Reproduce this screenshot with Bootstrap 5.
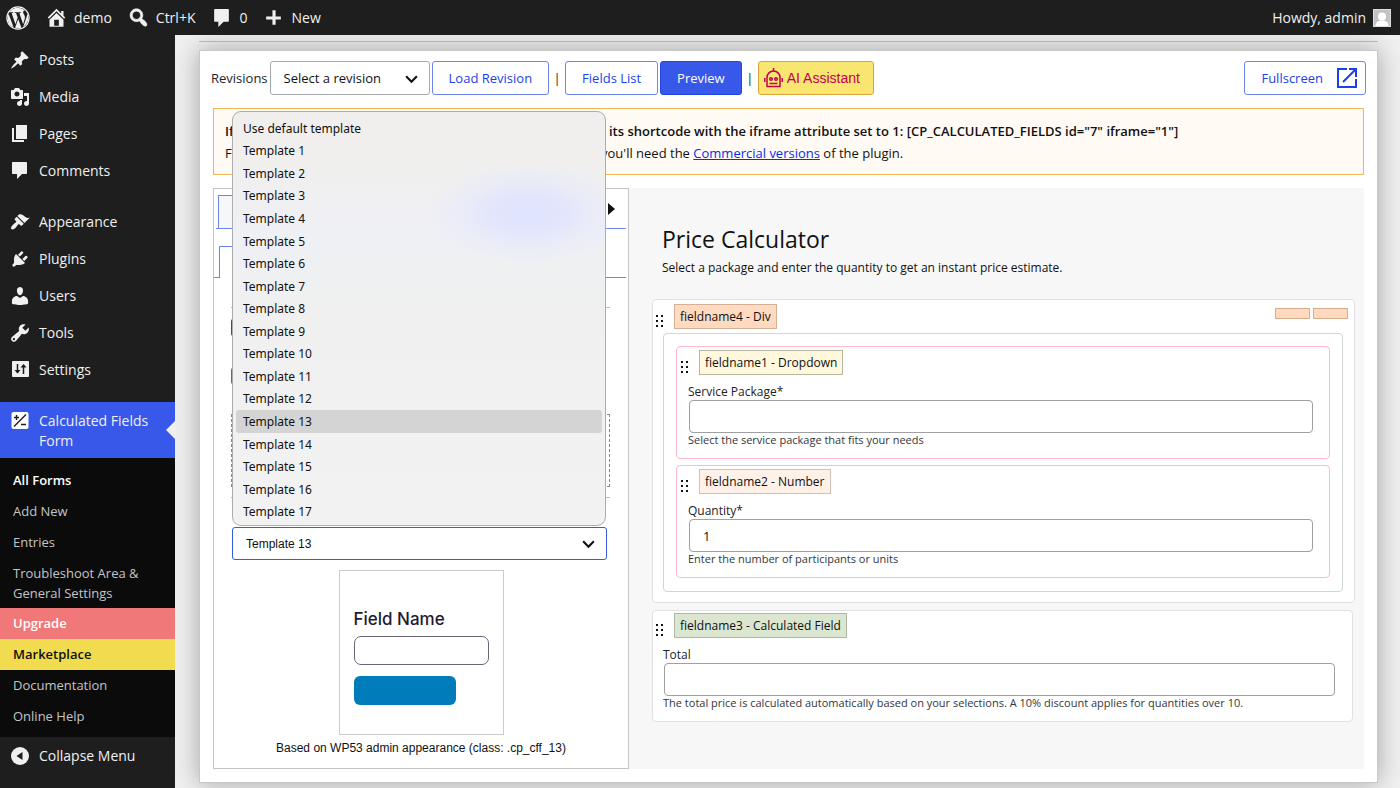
<!DOCTYPE html>
<html lang="en">
<head>
<meta charset="utf-8">
<meta name="viewport" content="width=device-width, initial-scale=1">
<title>Calculated Fields Form</title>
<link href="https://cdn.jsdelivr.net/npm/bootstrap@5.3.0/dist/css/bootstrap.min.css" rel="stylesheet">
<style>
:root { --wp-dark: #1e1e1e; --wp-blue: #3858e9; --line: #c3c4c7; --arrow: url("data:image/svg+xml,%3Csvg xmlns='http://www.w3.org/2000/svg' viewBox='0 0 14 14'%3E%3Cpath d='M2 5l5 5 5-5' fill='none' stroke='%23111' stroke-width='2'/%3E%3C/svg%3E"); }
body { font-family: "Open Sans", sans-serif; font-size: 13px; line-height: 20px; color: #1d2327; background: #f0f0f1; min-height: 100vh; }
a { color: #0a2bea; }
svg { display: block; flex: none; }

/* admin bar */
.adminbar { height: 35px; background: var(--wp-dark); font-size: 14px; padding: 0 9px 0 6px; }
.adminbar a { color: #f0f0f1; text-decoration: none; display: flex; align-items: center; gap: 7px; }
.avatar { width: 18px; height: 18px; background: #c3c3c3; border: 1px solid #ddd; }

/* side menu */
.sidemenu { width: 175px; background: var(--wp-dark); padding-top: 6px; }
.sidemenu a { color: #f0f0f1; text-decoration: none; }
.menu-row { display: flex; align-items: center; gap: 9px; height: 37px; padding-left: 10px; font-size: 14px; }
.menu-gap { margin-top: 14px; }
.menu-current { background: var(--wp-blue); height: 56px; position: relative; align-items: flex-start; padding-top: 9px; }
.menu-current::after { content: ""; position: absolute; right: 0; top: 19px; border: 9px solid transparent; border-right-color: #f0f0f1; border-left: 0; }
.submenu { background: #0b0b0b; padding: 7px 0 5px; font-size: 13px; }
.submenu a { display: block; padding: 5px 13px; color: #c3c4c7; line-height: 21px; }
.submenu a.sub-wrap { line-height: 20px; }
.submenu .sub-active { color: #fff; font-weight: 600; }
.submenu .sub-upgrade { background: #f07878; color: #fff; font-weight: 600; }
.submenu .sub-market { background: #f0dc4e; color: #111; font-weight: 600; }

/* workspace */
.workspace { padding: 6px 22px 5px 24px; min-width: 0; overflow: hidden; }
.workspace > hr { margin: 0 0 8px; border-color: #c0c0c0; opacity: 1; }
.builder { background: #fff; border: 1px solid #c8c8c8; box-shadow: 0 0 24px rgba(0,0,0,.32); padding: 10px 11px 13px; }
.bar-tools { gap: 2px; }
.bar-sep { width: 12px; text-align: center; }
.btn-wp { --bs-btn-font-size: 13px; --bs-btn-padding-x: 16px; --bs-btn-padding-y: 6px; --bs-btn-line-height: 20px; --bs-btn-border-radius: 3px; --bs-btn-color: #1c3fee; --bs-btn-border-color: #6c85f0; --bs-btn-bg: #fff; --bs-btn-hover-bg: #eef1ff; --bs-btn-hover-color: #1c3fee; }
.btn-wp-fill { --bs-btn-color: #fff; --bs-btn-bg: var(--wp-blue); --bs-btn-border-color: #2145e6; --bs-btn-hover-bg: #2145e6; --bs-btn-hover-color: #fff; }
.btn-ai { --bs-btn-color: #c4004f; --bs-btn-bg: #f9e671; --bs-btn-border-color: #dca43c; --bs-btn-padding-x: 5px; --bs-btn-hover-bg: #f5dd50; --bs-btn-hover-color: #c4004f; font-family: "Liberation Sans", sans-serif; --bs-btn-font-size: 14px; width: 116px; }
.btn-full { gap: 14px; padding-right: 8px; }
.sel-wp { appearance: none; height: 34px; border: 1px solid #a7aaad; border-radius: 3px; padding: 0 30px 0 13px; font-size: 13px; color: #111; background: #fff var(--arrow) no-repeat right 10px center / 15px 15px; }
.sel-rev { width: 160px; }
.notice-box { margin: 13px 2px; padding: 11px; height: 67px; border: 1px solid #f0b556; background: #fffaf4; line-height: 22px; font-size: 13px; color: #111; white-space: nowrap; }
.notice-box b { font-weight: 600; }
.hidden-run { display: inline-block; width: 384px; }
.hidden-run-short { display: inline-block; width: 376px; }

/* left column */
.split { margin: 0 2px; display: grid; grid-template-columns: minmax(0, 416fr) minmax(0, 735fr); }
.controls { border: 1px solid var(--line); padding: 6px 2px 10px; }
.tabline { height: 34px; border-bottom: 1px solid #6c85f0; padding-left: 2px; }
.tabstub { width: 120px; border: 1px solid #6c85f0; border-bottom: 0; background: #f6f7f9; }
.tabline-sub { height: 32px; margin: 17px 0 0 -2px; padding-left: 5px; }
.tabline-sub .tabstub { background: #fff; margin-bottom: -1px; }
.tri { align-self: flex-start; border: 6px solid transparent; border-left: 7px solid #111; border-right: 0; margin: 8px 11px 0 auto; }
.settings-pane { height: 249px; margin: 0 16px 0 15px; padding-top: 29px; }
.settings-pane hr { margin: 0; border-color: #bbb; opacity: 1; }
.peek-btn { width: 60px; height: 17px; margin-top: 11px; background: #2145e6; border-radius: 2px; }
.peek-box { width: 60px; height: 18px; margin-top: 31px; border: 1px solid #666; border-radius: 3px; }
.dashed-zone { height: 73px; margin: 29px 0 10px; border: 1px dashed #888; }
.pick { margin: 0 19px 0 16px; position: relative; }
.pick .sel-wp { display: block; width: 100%; height: 33px; border-color: var(--wp-blue); font-family: "Liberation Sans", sans-serif; font-size: 12px; }
.pick-menu { position: absolute; left: 0; right: 1px; bottom: 34px; height: 415px; margin: 0; padding: 5px 3px 2px; display: grid; grid-auto-rows: 1fr; border: 1px solid #adadad; border-radius: 9px; background: radial-gradient(ellipse 100px 50px at 295px 101px, #e0e4fd 25%, #e5e8fbaa 60%, #eceefa00), linear-gradient(#f0efee 12%, #eff0f5 28%, #f0f0f0 48%, #f2f2f2); font: 12px "Noto Sans", sans-serif; color: #111; z-index: 5; }
.pick-menu li { display: flex; align-items: center; padding-left: 7px; border-radius: 3px; }
.pick-menu .chosen { background: #d4d4d4; }
.sample { width: 165px; height: 165px; margin: 10px auto 3px; border: 1px solid #ccc; padding: 36px 14px 0; color: #1e1a33; }
.sample label { display: block; font: 500 17px/24px Inter, sans-serif; }
.sample input { display: block; width: 135px; height: 29px; margin-top: 5px; border: 1px solid #6a657a; border-radius: 7px; }
.sample button { display: block; width: 102px; height: 29px; margin-top: 11px; border: 0; border-radius: 6px; background: #007cba; }
.sample-note { font-family: "Liberation Sans", sans-serif; font-size: 12px; color: #111; text-align: center; }

/* right column */
.canvas-form { background: #f7f7f7; padding: 36px 9px 46px 23px; color: #111; }
.canvas-form h1 { font-size: 23px; line-height: 30px; font-weight: 400; margin: 0 10px 4px; }
.canvas-form > p { font-size: 12px; margin: 0 10px 21px; line-height: 20px; }
.fcard { background: #fff; border: 1px solid #e0e0e2; border-radius: 4px; }
.fcard-outer { padding: 4px 11px 10px 10px; margin-bottom: 7px; }
.fcard-total { padding: 2px 17px 11px 10px; margin-right: 2px; }
.fcard-inner { border-color: #d2d4d7; padding: 12px 12px 13px; }
.fcard-pink { border-color: #ffb9c8; padding: 3px 16px 11px 11px; }
.fcard-pink + .fcard-pink { margin-top: 6px; }
.fhead { display: flex; gap: 11px; }
.fcard-outer > .fhead { margin: 0 -5px 4px -7px; }
.fcard-pink > .fhead, .fcard-total > .fhead { margin-left: -7px; }
.fhead svg { margin-top: 11px; }
.ftag { height: 25px; padding: 0 5px; border: 1px solid #b9b49f; font-size: 12px; line-height: 23px; background: #fff8dc; }
.tag-div { background: #ffdac0; border-color: #d5b095; }
.tag-num { background: #fff1e8; border-color: #d0c2b8; }
.tag-calc { background: #dbe6d0; border-color: #adb8a2; }
.mini-box { width: 35px; height: 11px; margin: 4px 0 0 3px; background: #ffdac0; border: 1px solid #d9ab86; }
.canvas-form label { display: block; font-size: 12px; line-height: 17px; margin-top: 8px; color: #1d2327; }
.canvas-form .form-control { height: 33px; margin-left: 1px; width: calc(100% - 1px); border: 1px solid #a0a0a4; border-radius: 4px; padding: 0 13px; font-size: 13px; color: #111; background: #fff; }
.canvas-form .form-text { margin: 0; font-size: 11px; line-height: 14px; color: #32373c; }
</style>
</head>
<body class="d-flex flex-column">
<header class="adminbar d-flex align-items-center">
  <a href="#" aria-label="About WordPress"><svg width="24" height="24" viewBox="0 0 16 16" fill="#f0f0f1"><circle cx="8" cy="8" r="7.400" fill="none" stroke="#f0f0f1" stroke-width=".8"/><path d="M12.633 7.653c0-.848-.305-1.435-.566-1.892l-.08-.13c-.317-.51-.594-.958-.594-1.480 0-.63.478-1.218 1.152-1.218q.03 0 .058.003l.031.003A6.840 6.840 0 0 0 8 1.137 6.860 6.860 0 0 0 2.266 4.230c.16.005.313.009.442.009.717 0 1.828-.087 1.828-.087.37-.022.414.521.044.565 0 0-.371.044-.785.065l2.500 7.434 1.500-4.506-1.070-2.929c-.369-.022-.719-.065-.719-.065-.37-.022-.326-.588.043-.566 0 0 1.134.087 1.808.087.718 0 1.830-.087 1.830-.087.37-.022.413.522.043.566 0 0-.372.043-.785.065l2.480 7.377.684-2.287.054-.173c.27-.86.469-1.495.469-2.046zM1.137 8a6.860 6.860 0 0 0 3.868 6.176L1.730 5.206A6.800 6.800 0 0 0 1.137 8M6.061 14.583 8.121 8.600l2.109 5.780q.02.05.049.094a6.850 6.850 0 0 1-4.218.109m7.960-9.876q.046.328.047.706c0 .696-.13 1.479-.522 2.458l-2.096 6.060a6.860 6.860 0 0 0 2.572-9.224z"/></svg></a>
  <a href="#" class="ms-3"><svg width="21" height="21" viewBox="1 1 18 18" fill="#f0f0f1"><path fill-rule="evenodd" d="M16 8.500l1.530 1.530-1.060 1.060L10 4.600l-6.470 6.490-1.060-1.060L10 2.500l4 4v-2h2v4zm-6-2.460l6 5.990V18H4v-5.970zM12 17v-5H8v5h4z"/></svg>demo</a>
  <a href="#" class="ms-3"><svg width="21" height="21" viewBox="1 1 18 18" fill="#f0f0f1" stroke="#f0f0f1" stroke-width=".5"><path fill-rule="evenodd" d="M12.140 4.180c1.870 1.870 2.110 4.750.72 6.890.12.1.22.21.36.31.2.16.47.36.81.59.34.24.56.39.66.47.42.31.73.57.94.78.32.32.6.65.84 1 .25.35.44.69.59 1.040.14.35.21.68.18 1-.02.32-.14.59-.36.81s-.49.34-.81.36c-.31.02-.65-.04-.99-.19-.35-.14-.7-.34-1.040-.59-.35-.24-.68-.52-1-.84-.21-.21-.47-.52-.77-.93-.1-.13-.25-.35-.47-.66-.22-.32-.4-.57-.56-.78-.16-.2-.29-.35-.44-.5-2.070 1.090-4.690.76-6.440-.98-2.140-2.150-2.140-5.640 0-7.780 2.150-2.150 5.630-2.150 7.780 0zm-1.410 6.360c1.360-1.370 1.360-3.580 0-4.950-1.370-1.370-3.590-1.370-4.950 0-1.370 1.370-1.370 3.580 0 4.950 1.360 1.370 3.580 1.370 4.950 0z"/></svg>Ctrl+K</a>
  <a href="#" class="ms-3"><svg width="21" height="21" viewBox="0 0 20 20" fill="#f0f0f1"><path d="M4 2h12c.6 0 1 .4 1 1v10c0 .6-.4 1-1 1h-4l-5 5v-5H4c-.6 0-1-.4-1-1V3c0-.6.4-1 1-1z"/></svg>0</a>
  <a href="#" class="ms-3"><svg width="21" height="21" viewBox="0 0 20 20" fill="#f0f0f1"><path d="M17 9v3h-5v5H9v-5H3V9h6V3h3v6h5z"/></svg>New</a>
  <a href="#" class="ms-auto">Howdy, admin <svg class="avatar" viewBox="0 0 16 16" fill="#fff"><circle cx="8" cy="6.500" r="4"/><path d="M1.500 16c0-4 3-5.500 6.500-5.500s6.500 1.500 6.500 5.500z"/></svg></a>
</header>

<div class="d-flex flex-grow-1">
<nav class="sidemenu flex-shrink-0">
  <a href="#" class="menu-row"><svg width="20" height="20" viewBox="0 0 20 20" fill="#f0f0f1"><path d="M10.440 3.020l1.820-1.820 6.360 6.350-1.830 1.820c-1.050-.68-2.480-.57-3.410.36l-.75.75c-.92.93-1.040 2.350-.35 3.410l-1.830 1.820-2.410-2.410-2.800 2.790c-.42.42-3.380 2.710-3.800 2.290s1.860-3.390 2.280-3.810l2.790-2.790L4.100 9.360l1.830-1.820c1.050.69 2.480.57 3.400-.36l.75-.75c.93-.92 1.050-2.350.36-3.410z"/></svg>Posts</a>
  <a href="#" class="menu-row"><svg width="20" height="20" viewBox="0 0 20 20" fill="#f0f0f1"><path fill-rule="evenodd" d="M13 11V4c0-.55-.45-1-1-1h-1.670L9 1H5L3.670 3H2c-.55 0-1 .45-1 1v7c0 .55.45 1 1 1h10c.55 0 1-.45 1-1zM7 4.500c1.380 0 2.500 1.120 2.500 2.500S8.380 9.500 7 9.500 4.500 8.380 4.500 7 5.620 4.500 7 4.500zM14 6h5v10.500c0 1.380-1.120 2.500-2.500 2.500S14 17.880 14 16.500s1.120-2.500 2.500-2.500c.17 0 .34.02.5.05V9h-3V6zm-4 8.050V13h2v3.500c0 1.380-1.120 2.500-2.500 2.500S7 17.880 7 16.500 8.120 14 9.500 14c.17 0 .34.02.5.05z"/></svg>Media</a>
  <a href="#" class="menu-row"><svg width="20" height="20" viewBox="0 0 20 20" fill="#f0f0f1"><path d="M6 15V1h11v14H6zm-1 1h9v2H2V4h2v12z"/></svg>Pages</a>
  <a href="#" class="menu-row"><svg width="20" height="20" viewBox="0 0 20 20" fill="#f0f0f1"><path d="M3 1h13c.6 0 1 .4 1 1v10c0 .6-.4 1-1 1h-4l-5 5v-5H3c-.6 0-1-.4-1-1V2c0-.6.4-1 1-1z"/></svg>Comments</a>
  <a href="#" class="menu-row menu-gap"><svg width="20" height="20" viewBox="0 0 20 20" fill="#f0f0f1"><path d="M14.480 11.060L7.410 3.990l1.500-1.500c.5-.56 2.300-.47 3.510.32 1.210.8 1.430 1.280 2.910 2.100 1.180.64 2.450 1.260 4.450.85zm-.71.71L6.700 4.700 4.930 6.470c-.39.39-.39 1.020 0 1.410l1.060 1.060c.39.39.39 1.030 0 1.420-.6.6-1.430 1.110-2.210 1.690-.35.26-.7.53-1.010.84C1.430 14.230.4 16.080 1.400 17.070c.99 1 2.840-.03 4.180-1.360.31-.31.58-.66.85-1.020.57-.78 1.080-1.610 1.690-2.210.39-.39 1.020-.39 1.410 0l1.060 1.060c.39.39 1.020.39 1.410 0z"/></svg>Appearance</a>
  <a href="#" class="menu-row"><svg width="20" height="20" viewBox="0 0 20 20" fill="#f0f0f1"><path d="M13.110 4.360L9.870 7.600 8 5.730l3.240-3.240c.35-.34 1.050-.2 1.560.32.52.51.66 1.210.31 1.550zm-8 1.770l.91-1.120 9.010 9.010-1.190.84c-.71.71-2.630 1.160-3.820 1.160H6.140L4.900 17.260c-.59.59-1.540.59-2.120 0-.59-.58-.59-1.530 0-2.120l1.240-1.240v-3.880c0-1.130.4-3.190 1.090-3.890zm7.260 3.970l3.240-3.240c.34-.35 1.040-.21 1.550.31.52.51.66 1.210.31 1.550l-3.240 3.250z"/></svg>Plugins</a>
  <a href="#" class="menu-row"><svg width="20" height="20" viewBox="1 1 18 18" fill="#f0f0f1"><path d="M10 9.250c-2.270 0-2.730-3.440-2.730-3.440C7 4.020 7.820 2 9.970 2c2.160 0 2.980 2.020 2.710 3.810 0 0-.41 3.440-2.680 3.440zm0 2.570L12.720 10c2.390 0 4.520 2.330 4.520 4.530v2.490s-3.650 1.130-7.240 1.130c-3.650 0-7.240-1.130-7.240-1.130v-2.490c0-2.250 1.940-4.480 4.470-4.480z"/></svg>Users</a>
  <a href="#" class="menu-row"><svg width="20" height="20" viewBox="1 1 18 18" fill="#f0f0f1"><path fill-rule="evenodd" d="M16.680 9.770c-1.340 1.340-3.300 1.670-4.950.99l-5.410 6.520c-.99.99-2.590.99-3.580 0s-.99-2.590 0-3.570l6.520-5.420c-.68-1.650-.35-3.610.99-4.950 1.280-1.280 3.120-1.620 4.720-1.060l-2.890 2.890 2.820 2.820 2.860-2.870c.53 1.580.18 3.390-1.080 4.650zM3.810 16.210c.4.39 1.040.39 1.430 0 .4-.4.4-1.040 0-1.430-.39-.4-1.030-.4-1.430 0-.39.39-.39 1.030 0 1.430z"/></svg>Tools</a>
  <a href="#" class="menu-row"><svg width="20" height="20" viewBox="0 0 20 20"><rect x="2" y="1" width="17" height="16" rx="1" fill="#f0f0f1"/><path d="M7.500 4v9M13.500 14V5" stroke="#1e1e1e" stroke-width="1.500" fill="none"/><path d="M4.500 10h6l-3 3.500zM10.500 7.500h6l-3-3.500z" fill="#1e1e1e"/></svg>Settings</a>
  <a href="#" class="menu-row menu-gap menu-current"><svg width="20" height="20" viewBox="0 0 20 20"><rect x="1.500" y="1" width="17" height="17" rx="2" fill="#fff"/><path d="M4 15.500L16 3.500M4 6.500h5M6.500 4v5M11 13.500h5" stroke="#1e1e1e" stroke-width="1.400" fill="none"/></svg><span>Calculated Fields<br>Form</span></a>
  <div class="submenu">
    <a href="#" class="sub-active">All Forms</a>
    <a href="#">Add New</a>
    <a href="#">Entries</a>
    <a href="#" class="sub-wrap">Troubleshoot Area &amp; General Settings</a>
    <a href="#" class="sub-upgrade">Upgrade</a>
    <a href="#" class="sub-market">Marketplace</a>
    <a href="#">Documentation</a>
    <a href="#">Online Help</a>
  </div>
  <a href="#" class="menu-row"><svg width="20" height="20" viewBox="0 0 20 20"><circle cx="10" cy="10" r="9" fill="#f0f0f1"/><path d="M12.500 6v8L6.500 10z" fill="#1e1e1e"/></svg>Collapse Menu</a>
</nav>

<main class="workspace flex-grow-1">
  <hr>
  <div class="builder">
    <div class="bar-tools d-flex align-items-center">
      <label for="rev">Revisions</label>
      <select id="rev" class="sel-wp sel-rev"><option>Select a revision</option></select>
      <button type="button" class="btn btn-wp">Load Revision</button>
      <span class="bar-sep">|</span>
      <button type="button" class="btn btn-wp">Fields List</button>
      <button type="button" class="btn btn-wp btn-wp-fill">Preview</button>
      <span class="bar-sep">|</span>
      <button type="button" class="btn btn-wp btn-ai d-flex align-items-center gap-1"><svg width="19" height="20" viewBox="0 0 19 20" fill="none" stroke="#c4004f" stroke-width="1.500"><path d="M3 18.500V9.500a6.500 6.500 0 0 1 13 0v9zM9.500 3V0M.8 10v4M18.200 10v4M5.500 15.500h8"/><circle cx="7" cy="11" r="1.300"/><circle cx="12" cy="11" r="1.300"/></svg>AI Assistant</button>
      <button type="button" class="btn btn-wp btn-full ms-auto d-flex align-items-center">Fullscreen<svg width="20" height="20" viewBox="0 0 20 20" fill="none" stroke="#1c3fee" stroke-width="2"><path d="M10 1H1v18h18V11M6 14L18.500 1.500M12 1h7v8"/></svg></button>
    </div>

    <div class="notice-box overflow-hidden">
      <div><b><span class="hidden-run">If</span>its shortcode with the iframe attribute set to 1: [CP_CALCULATED_FIELDS id="7" iframe="1"]</b></div>
      <div><span class="hidden-run-short">F</span>you'll need the <a href="#">Commercial versions</a> of the plugin.</div>
    </div>

    <div class="split">
      <section class="controls">
        <div class="tabline d-flex"><div class="tabstub"></div><div class="tri"></div></div>
        <div class="tabline tabline-sub d-flex"><div class="tabstub"></div></div>
        <div class="settings-pane">
          <hr>
          <div class="peek-btn"></div>
          <div class="peek-box"></div>
          <div class="dashed-zone"></div>
          <hr>
        </div>
        <div class="pick">
          <select class="sel-wp" aria-label="Form template"><option>Template 13</option></select>
          <ul class="pick-menu list-unstyled" role="listbox">
            <li>Use default template</li><li>Template 1</li><li>Template 2</li><li>Template 3</li><li>Template 4</li><li>Template 5</li><li>Template 6</li><li>Template 7</li><li>Template 8</li><li>Template 9</li><li>Template 10</li><li>Template 11</li><li>Template 12</li><li class="chosen">Template 13</li><li>Template 14</li><li>Template 15</li><li>Template 16</li><li>Template 17</li>
          </ul>
        </div>
        <div class="sample">
          <label for="sample-field">Field Name</label>
          <input id="sample-field" type="text">
          <button type="button" aria-label="Sample button"></button>
        </div>
        <div class="sample-note">Based on WP53 admin appearance (class: .cp_cff_13)</div>
      </section>

      <section class="canvas-form">
        <h1>Price Calculator</h1>
        <p>Select a package and enter the quantity to get an instant price estimate.</p>
        <div class="fcard fcard-outer">
          <div class="fhead">
            <svg width="7" height="12" viewBox="0 0 7 12"><path d="M0 0h2v2H0zM5 0h2v2H5zM0 5h2v2H0zM5 5h2v2H5zM0 10h2v2H0zM5 10h2v2H5z" fill="#111"/></svg>
            <span class="ftag tag-div">fieldname4 - Div</span>
            <span class="d-flex ms-auto"><span class="mini-box"></span><span class="mini-box"></span></span>
          </div>
          <div class="fcard fcard-inner">
            <div class="fcard fcard-pink">
              <div class="fhead">
                <svg width="7" height="12" viewBox="0 0 7 12"><path d="M0 0h2v2H0zM5 0h2v2H5zM0 5h2v2H0zM5 5h2v2H5zM0 10h2v2H0zM5 10h2v2H5z" fill="#111"/></svg>
                <span class="ftag">fieldname1 - Dropdown</span>
              </div>
              <label for="pkg">Service Package*</label>
              <input id="pkg" type="text" class="form-control">
              <div class="form-text">Select the service package that fits your needs</div>
            </div>
            <div class="fcard fcard-pink">
              <div class="fhead">
                <svg width="7" height="12" viewBox="0 0 7 12"><path d="M0 0h2v2H0zM5 0h2v2H5zM0 5h2v2H0zM5 5h2v2H5zM0 10h2v2H0zM5 10h2v2H5z" fill="#111"/></svg>
                <span class="ftag tag-num">fieldname2 - Number</span>
              </div>
              <label for="qty">Quantity*</label>
              <input id="qty" type="text" class="form-control" value="1">
              <div class="form-text">Enter the number of participants or units</div>
            </div>
          </div>
        </div>
        <div class="fcard fcard-total">
          <div class="fhead">
            <svg width="7" height="12" viewBox="0 0 7 12"><path d="M0 0h2v2H0zM5 0h2v2H5zM0 5h2v2H0zM5 5h2v2H5zM0 10h2v2H0zM5 10h2v2H5z" fill="#111"/></svg>
            <span class="ftag tag-calc">fieldname3 - Calculated Field</span>
          </div>
          <label for="total">Total</label>
          <input id="total" type="text" class="form-control">
          <div class="form-text">The total price is calculated automatically based on your selections. A 10% discount applies for quantities over 10.</div>
        </div>
      </section>
    </div>
  </div>
</main>
</div>
<script src="https://cdn.jsdelivr.net/npm/bootstrap@5.3.0/dist/js/bootstrap.bundle.min.js"></script>
</body>
</html>
